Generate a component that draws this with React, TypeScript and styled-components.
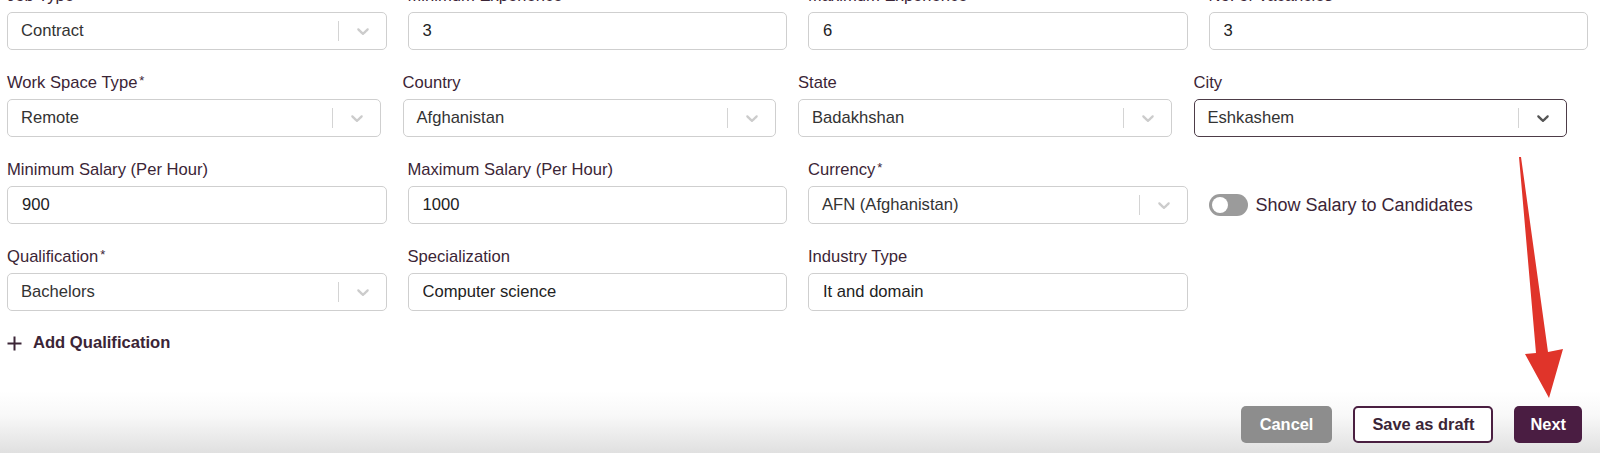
import React from "react";
import styled, { createGlobalStyle, css } from "styled-components";

const GlobalStyle = createGlobalStyle`
  html, body {
    margin: 0;
    padding: 0;
    background: #fff;
    overflow: hidden;
  }
  body {
    font-family: "Liberation Sans", Arial, sans-serif;
  }
`;

const Page = styled.div`
  position: relative;
  width: 1600px;
  height: 453px;
  overflow: hidden;
`;

const Form = styled.div`
  margin-top: -14px;
  padding: 0 12px 0 7px;
  display: flex;
  flex-direction: column;
  gap: 23px;
`;

const Row = styled.div<{ $narrow?: boolean }>`
  display: grid;
  grid-template-columns: repeat(4, 1fr);
  column-gap: ${(p) => (p.$narrow ? "22px" : "21px")};
  width: ${(p) => (p.$narrow ? "1560px" : "1581px")};
`;

const Field = styled.div`
  display: flex;
  flex-direction: column;
  gap: 6px;
`;

const Label = styled.label`
  font-size: 16.6px;
  line-height: 20px;
  color: #3b2536;
  white-space: nowrap;

  sup {
    font-size: 13px;
    vertical-align: top;
    position: relative;
    top: -2px;
    margin-left: 2px;
  }
`;

const boxBase = css`
  box-sizing: border-box;
  height: 38px;
  border: 1px solid #cfcfcf;
  border-radius: 5px;
  background: #fff;
  font-size: 16.6px;
  color: #222;
`;

const TextInput = styled.input`
  ${boxBase};
  width: 100%;
  padding: 0 14px;
  font-family: inherit;
  outline: none;
`;

const SelectBox = styled.div<{ $focused?: boolean }>`
  ${boxBase};
  display: flex;
  align-items: center;
  padding-left: 13px;
  border-color: ${(p) => (p.$focused ? "#4d3c48" : "#cfcfcf")};
  color: #333;
`;

const SelectValue = styled.span`
  flex: 1;
  white-space: nowrap;
`;

const Separator = styled.span`
  width: 1px;
  height: 20px;
  background: #d4d4d4;
`;

const Indicator = styled.span<{ $focused?: boolean }>`
  display: flex;
  align-items: center;
  padding: 0 13px 0 14px;
  color: ${(p) => (p.$focused ? "#555" : "#ccc")};
`;

const ToggleCell = styled.div`
  padding-top: 26px;
  height: 38px;
  display: flex;
  align-items: center;
  gap: 8px;
`;

const Track = styled.span`
  position: relative;
  width: 39px;
  height: 22px;
  border-radius: 11px;
  background: #9b9b9b;
  flex-shrink: 0;
`;

const Knob = styled.span`
  position: absolute;
  left: 3px;
  top: 3px;
  width: 16px;
  height: 16px;
  border-radius: 50%;
  background: #fff;
`;

const ToggleText = styled.span`
  font-size: 18px;
  color: #3b2536;
  white-space: nowrap;
`;

const AddLink = styled.button`
  margin-top: -1px;
  align-self: flex-start;
  display: flex;
  align-items: center;
  gap: 11px;
  padding: 0;
  border: 0;
  background: none;
  font-family: inherit;
  font-size: 16.6px;
  line-height: 20px;
  font-weight: bold;
  color: #3b2536;
  cursor: pointer;
`;

const Footer = styled.div`
  position: absolute;
  left: 0;
  right: 0;
  bottom: 0;
  height: 62px;
  box-sizing: border-box;
  padding: 15px 18px 10px 0;
  display: flex;
  justify-content: flex-end;
  gap: 21px;
  background: linear-gradient(to bottom, #ffffff 0%, #f8f8f8 40%, #e0e0e0 100%);
`;

const variants = {
  cancel: css`
    background: #8d8d8d;
    color: #fff;
    border: 0;
    padding: 0 19px;
  `,
  draft: css`
    background: #fff;
    color: #3b2536;
    border: 2px solid #4a1f41;
    padding: 0 17px;
  `,
  next: css`
    background: #4a1d42;
    color: #fff;
    border: 0;
    padding: 0 16px;
  `,
};

const Button = styled.button<{ $variant: keyof typeof variants }>`
  height: 37px;
  border-radius: 5px;
  font-family: inherit;
  font-size: 16.4px;
  font-weight: bold;
  cursor: pointer;
  ${(p) => variants[p.$variant]};
`;

const ArrowLayer = styled.svg`
  position: absolute;
  left: 0;
  top: 0;
  pointer-events: none;
`;

const Chevron = () => (
  <svg width="20" height="20" viewBox="0 0 20 20" fill="currentColor">
    <path d="M4.516 7.548c0.436-0.446 1.043-0.481 1.576 0l3.908 3.747 3.908-3.747c0.533-0.481 1.141-0.446 1.574 0 0.436 0.445 0.408 1.197 0 1.615-0.406 0.418-4.695 4.502-4.695 4.502-0.217 0.223-0.502 0.335-0.787 0.335s-0.57-0.112-0.789-0.335c0 0-4.287-4.084-4.695-4.502s-0.436-1.17 0-1.615z" />
  </svg>
);

const Plus = () => (
  <svg width="15" height="15" viewBox="0 0 15 15" stroke="currentColor" strokeWidth="2">
    <path d="M7.5 0.5v14M0.5 7.5h14" />
  </svg>
);

type FieldDef = { label: string; value: string; select?: boolean; required?: boolean; focused?: boolean };

const FormField = ({ label, value, select, required, focused }: FieldDef) => (
  <Field>
    <Label>
      {label}
      {required && <sup>*</sup>}
    </Label>
    {select ? (
      <SelectBox $focused={focused}>
        <SelectValue>{value}</SelectValue>
        <Separator />
        <Indicator $focused={focused}>
          <Chevron />
        </Indicator>
      </SelectBox>
    ) : (
      <TextInput defaultValue={value} />
    )}
  </Field>
);

const row1: FieldDef[] = [
  { label: "Job Type", value: "Contract", select: true },
  { label: "Minimum Experience", value: "3" },
  { label: "Maximum Experience", value: "6" },
  { label: "No. of Vacancies", value: "3" },
];

const row2: FieldDef[] = [
  { label: "Work Space Type", value: "Remote", select: true, required: true },
  { label: "Country", value: "Afghanistan", select: true },
  { label: "State", value: "Badakhshan", select: true },
  { label: "City", value: "Eshkashem", select: true, focused: true },
];

const row3: FieldDef[] = [
  { label: "Minimum Salary (Per Hour)", value: "900" },
  { label: "Maximum Salary (Per Hour)", value: "1000" },
  { label: "Currency", value: "AFN (Afghanistan)", select: true, required: true },
];

const row4: FieldDef[] = [
  { label: "Qualification", value: "Bachelors", select: true, required: true },
  { label: "Specialization", value: "Computer science" },
  { label: "Industry Type", value: "It and domain" },
];

export default function App() {
  return (
    <Page>
      <GlobalStyle />
      <Form>
        <Row>
          {row1.map((f) => (
            <FormField key={f.label} {...f} />
          ))}
        </Row>
        <Row $narrow>
          {row2.map((f) => (
            <FormField key={f.label} {...f} />
          ))}
        </Row>
        <Row>
          {row3.map((f) => (
            <FormField key={f.label} {...f} />
          ))}
          <ToggleCell>
            <Track>
              <Knob />
            </Track>
            <ToggleText>Show Salary to Candidates</ToggleText>
          </ToggleCell>
        </Row>
        <Row>
          {row4.map((f) => (
            <FormField key={f.label} {...f} />
          ))}
        </Row>
        <AddLink>
          <Plus />
          Add Qualification
        </AddLink>
      </Form>
      <Footer>
        <Button $variant="cancel">Cancel</Button>
        <Button $variant="draft">Save as draft</Button>
        <Button $variant="next">Next</Button>
      </Footer>
      <ArrowLayer width="1600" height="453" viewBox="0 0 1600 453">
        <path d="M1519 157 L1521 157 L1548 352 L1563 349 L1549 398 L1525 354 L1536 353 Z" fill="#e0342a" />
      </ArrowLayer>
    </Page>
  );
}
